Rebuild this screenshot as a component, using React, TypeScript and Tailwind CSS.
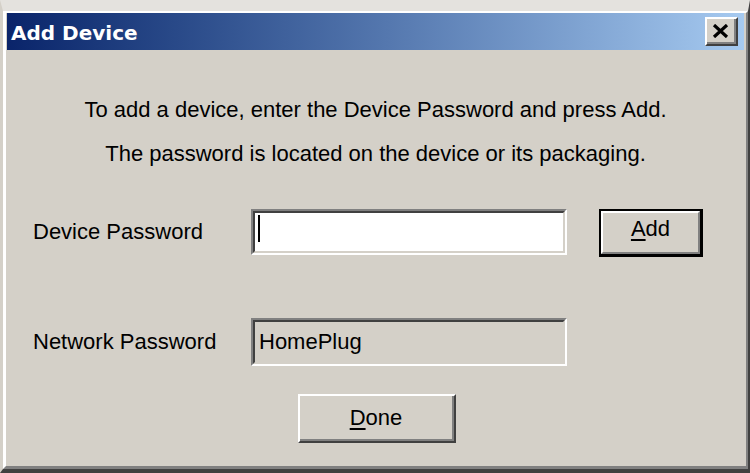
import React from 'react';

const Sunken = ({ bg, children }: { bg: string; children?: React.ReactNode }) => (
  <div className="h-full w-full border-2 border-t-[#808080] border-l-[#808080] border-r-white border-b-white">
    <div className={`h-full w-full border-2 border-t-[#404040] border-l-[#404040] border-r-[#d4d0c8] border-b-[#d4d0c8] ${bg}`}>
      {children}
    </div>
  </div>
);

const App = () => {
  return (
    <div
      className="w-[750px] h-[473px] bg-[#d4d0c8] flex flex-col border-t-[11px] border-t-[#e4e2de] border-l-[3px] border-l-[#d4d0c8] border-r-[2px] border-r-[#404040] border-b-[4px] border-b-[#404040]"
      style={{ fontFamily: '"Liberation Sans", Arial, sans-serif' }}
    >
      <div className="flex-1 flex flex-col border-t-2 border-l-[3px] border-t-white border-l-white border-r-[2px] border-b-[3px] border-r-[#808080] border-b-[#808080] pl-px pr-[2px]">
        {/* Title bar */}
        <div className="h-[37px] flex items-center justify-between bg-linear-to-r from-[#0a246a] to-[#a6caf0]">
          <span
            className="pl-[4px] pt-[3px] text-[20px] leading-[24px] font-bold text-white"
            style={{ fontFamily: '"DejaVu Sans", Verdana, sans-serif' }}
          >
            Add Device
          </span>
          <div className="mr-[6px] w-[33px] h-[29px] bg-[#d4d0c8] border-2 border-t-white border-l-white border-r-[#404040] border-b-[#404040]">
            <div className="w-full h-full flex items-center justify-center border-r-2 border-b-2 border-r-[#808080] border-b-[#808080]">
              <svg width="17" height="14" viewBox="0 0 17 14">
                <path d="M2 1 L15 13 M15 1 L2 13" stroke="#000" strokeWidth="3.2" />
              </svg>
            </div>
          </div>
        </div>

        {/* Body */}
        <div className="flex flex-col">
          <div className="pt-[38px] text-center text-[22px] leading-[44px] text-black">
            <p>To add a device, enter the Device Password and press Add.</p>
            <p>The password is located on the device or its packaging.</p>
          </div>

          <div className="mt-[33px] flex items-start pl-[26px]">
            <span className="w-[218px] h-[46px] flex items-center text-[22px] leading-[26px] text-black">Device Password</span>
            <div className="w-[316px] h-[46px]">
              <Sunken bg="bg-white">
                <div className="ml-[3px] mt-[2px] w-[2px] h-[27px] bg-black" />
              </Sunken>
            </div>
            <div className="ml-[32px] w-[104px] h-[48px] border-2 border-r-[3px] border-b-[3px] border-black bg-[#d4d0c8]">
              <div className="w-full h-full flex items-center justify-center pb-[8px] border-2 border-t-white border-l-white border-r-[#808080] border-b-[#808080] text-[22px] leading-[26px] text-black">
                <span><span className="underline underline-offset-[3px] decoration-[1.5px]">A</span>dd</span>
              </div>
            </div>
          </div>

          <div className="mt-[61px] flex items-center pl-[26px]">
            <span className="w-[218px] text-[22px] leading-[26px] text-black">Network Password</span>
            <div className="w-[316px] h-[48px]">
              <Sunken bg="bg-[#d4d0c8]">
                <div className="h-full flex items-center pl-[4px] text-[22px] leading-[26px] text-black">HomePlug</div>
              </Sunken>
            </div>
          </div>

          <div className="mt-[28px] ml-[291px] w-[158px] h-[49px] bg-[#d4d0c8] border-2 border-t-white border-l-white border-r-[#404040] border-b-[#404040]">
            <div className="w-full h-full flex items-center justify-center border-r-2 border-b-2 border-r-[#808080] border-b-[#808080] text-[22px] leading-[26px] text-black">
              <span><span className="underline underline-offset-[3px] decoration-[1.5px]">D</span>one</span>
            </div>
          </div>
        </div>
      </div>
    </div>
  );
};

export default App;
